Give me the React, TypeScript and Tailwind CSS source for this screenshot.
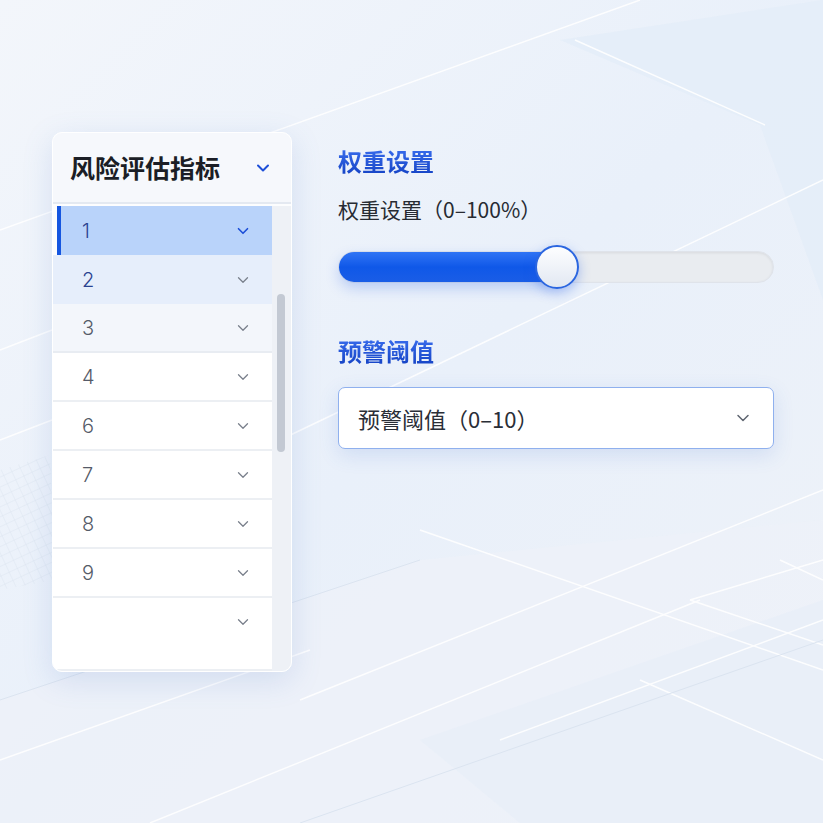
import React from 'react';

const font = { fontFamily: '"Noto Sans CJK SC", "Noto Sans", sans-serif' };
const digits = { fontFamily: 'Inter, "Noto Sans", sans-serif' };

const rows = ['1', '2', '3', '4', '6', '7', '8', '9', ''];

function Chevron({ className, width = 2 }: { className?: string; width?: number }) {
  return (
    <svg viewBox="0 0 24 24" fill="none" stroke="currentColor" strokeWidth={width} strokeLinecap="round" strokeLinejoin="round" className={className}>
      <path d="m6 9 6 6 6-6" />
    </svg>
  );
}

// decorative backdrop: soft panes and thin diagonal light lines
function Backdrop() {
  return (
    <svg className="absolute inset-0 h-full w-full" viewBox="0 0 823 823" preserveAspectRatio="none">
      <defs>
        <linearGradient id="bg" x1="0" y1="0" x2="1" y2="1">
          <stop offset="0" stopColor="#f3f6fb" />
          <stop offset="0.5" stopColor="#e9f0fa" />
          <stop offset="1" stopColor="#eef2f8" />
        </linearGradient>
        <pattern id="grid" width="9" height="9" patternUnits="userSpaceOnUse" patternTransform="rotate(-25)">
          <path d="M9 0H0V9" fill="none" stroke="#d6dfec" strokeWidth="0.8" />
        </pattern>
      </defs>
      <rect width="823" height="823" fill="url(#bg)" />
      <polygon points="560,40 823,0 823,300 760,125" fill="#e3ecf8" opacity="0.7" />
      <polygon points="0,700 420,560 823,520 823,823 0,823" fill="#eef2f8" opacity="0.6" />
      <polygon points="420,740 823,600 823,823 520,823" fill="#e7eef8" opacity="0.7" />
      <polygon points="0,470 50,455 55,580 0,590" fill="url(#grid)" opacity="0.8" />
      <g stroke="#ffffff" strokeWidth="1.4" fill="none" opacity="0.9">
        <line x1="0" y1="230" x2="640" y2="0" />
        <line x1="575" y1="40" x2="765" y2="125" />
        <line x1="280" y1="440" x2="823" y2="180" />
        <line x1="0" y1="350" x2="52" y2="330" />
        <line x1="0" y1="440" x2="52" y2="420" />
        <line x1="300" y1="700" x2="823" y2="490" />
        <line x1="0" y1="760" x2="310" y2="650" />
        <line x1="420" y1="530" x2="823" y2="670" />
        <line x1="690" y1="600" x2="823" y2="560" />
        <line x1="690" y1="600" x2="823" y2="645" />
        <line x1="780" y1="560" x2="823" y2="580" />
        <line x1="500" y1="740" x2="823" y2="620" />
        <line x1="150" y1="823" x2="700" y2="600" />
        <line x1="640" y1="680" x2="823" y2="760" />
      </g>
      <g stroke="#dbe4f0" strokeWidth="1" fill="none">
        <line x1="0" y1="700" x2="420" y2="560" />
        <line x1="300" y1="823" x2="823" y2="640" />
      </g>
    </svg>
  );
}

export default function App() {
  return (
    <div className="relative h-[823px] w-[823px] overflow-hidden" style={font}>
      <Backdrop />
      <div className="relative flex gap-[46px] pl-[52px] pt-[132px]">
        {/* indicator list */}
        <div className="flex h-[540px] w-[240px] flex-col overflow-hidden rounded-[10px] border border-white bg-white/85 shadow-[0_8px_30px_rgba(90,130,200,0.18)]">
          <div className="flex h-[71px] shrink-0 items-center justify-between border-b-2 border-[#e4e9f1] bg-[#f6f8fc] pl-[17px] pr-[18px]">
            <span className="text-[25px] font-bold leading-none text-[#1b1e26]">风险评估指标</span>
            <Chevron className="h-5 w-5 text-[#1d4fd8]" width={2.4} />
          </div>
          <div className="flex min-h-0 flex-1 pt-[2px]">
            <div className="flex flex-1 flex-col">
              {rows.map((r, i) => {
                const selected = i === 0;
                const bg =
                  i === 0 ? 'bg-[#b9d3fa]' : i === 1 ? 'bg-[#e6eefb]' : i === 2 ? 'bg-[#f3f6fb] border-b-2 border-[#e8ecf2]' : 'bg-white border-b-2 border-[#eceff3]';
                const last = i === rows.length - 1;
                return (
                  <div
                    key={i}
                    className={`relative flex shrink-0 items-center justify-between pr-[20px] ${last ? 'flex-1 items-start pt-[15px]' : 'h-[49px]'} ${bg} ${selected ? 'ml-[4px] h-[47px] pl-[25px]' : 'pl-[29px]'}`}
                  >
                    {selected && <span className="absolute bottom-0 left-0 top-0 w-[4px] bg-[#1556e0]" />}
                    <span style={digits} className={`text-[20px] font-light ${i < 2 ? 'text-[#2a4290]' : 'text-[#555b68]'}`}>{r}</span>
                    <Chevron className={`h-[18px] w-[18px] ${i === 0 ? 'text-[#1d4fd8]' : 'text-[#7a808c]'}`} width={i === 0 ? 2.2 : 1.7} />
                  </div>
                );
              })}
            </div>
            <div className="w-[19px] shrink-0 bg-[#eef1f6] pl-[5px] pt-[88px]">
              <div className="h-[158px] w-[8px] rounded-full bg-[#c3c9d3]" />
            </div>
          </div>
        </div>

        {/* settings */}
        <div className="flex w-[436px] flex-col pt-[14px]">
          <h2 className="bg-gradient-to-b from-[#3b6ff0] to-[#1442c4] bg-clip-text text-[24px] font-bold leading-[30px] text-transparent">权重设置</h2>
          <div className="mt-[18px] text-[21px] leading-[30px] text-[#272b33]">权重设置（0–100%）</div>
          <div className="relative mt-[27px] h-[32px] rounded-full border border-[#dfe3ea] bg-[#e9ecf0] shadow-[inset_0_1px_3px_rgba(0,0,0,0.08)]">
            <div className="h-full w-[217px] rounded-full bg-gradient-to-b from-[#2f74f5] via-[#0f58e8] to-[#1a5de6] shadow-[0_6px_14px_rgba(30,90,230,0.25)]" />
            <div className="absolute left-[196px] top-[-7px] h-[44px] w-[44px] rounded-full border-2 border-[#2b66e0] bg-gradient-to-b from-[#fdfeff] to-[#e2e8f2] shadow-[0_4px_12px_rgba(30,90,230,0.35)]" />
          </div>
          <h2 className="mt-[53px] bg-gradient-to-b from-[#3b6ff0] to-[#1442c4] bg-clip-text text-[24px] font-bold leading-[30px] text-transparent">预警阈值</h2>
          <div className="mt-[21px] flex h-[62px] items-center justify-between rounded-[7px] border border-[#8fb0ee] bg-white pl-[19px] pr-[20px] shadow-[0_6px_20px_rgba(60,110,210,0.15)]">
            <span className="text-[22px] text-[#2a2e37]">预警阈值（0–10）</span>
            <Chevron className="h-[20px] w-[20px] text-[#5f6570]" width={1.8} />
          </div>
        </div>
      </div>
    </div>
  );
}
